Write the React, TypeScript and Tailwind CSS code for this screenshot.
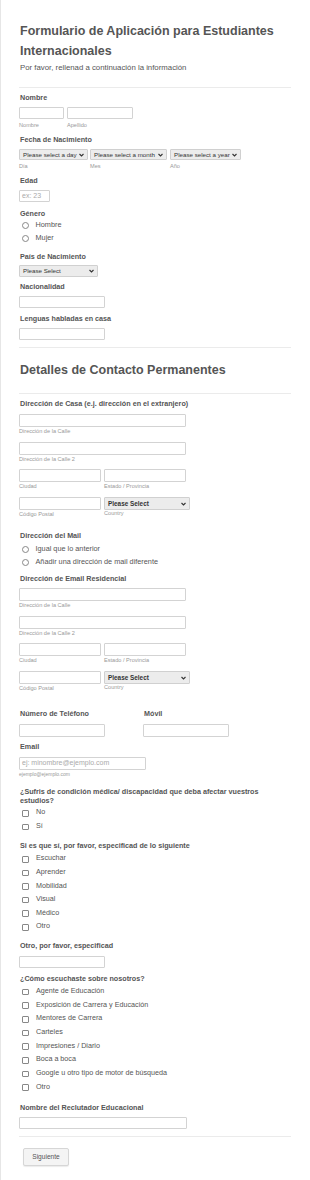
import React from "react";

const FONT = { fontFamily: '"Liberation Sans", Arial, sans-serif' };

function Label({ children, className = "" }: { children: React.ReactNode; className?: string }) {
  return <div className={`text-[7.2px] leading-[10px] font-bold text-[#555] ${className}`}>{children}</div>;
}

function Sub({ children, className = "" }: { children: React.ReactNode; className?: string }) {
  return <div className={`text-[5.6px] leading-[8px] text-[#999] ${className}`}>{children}</div>;
}

function Input({ w, h = 13, placeholder, className = "" }: { w: string; h?: number; placeholder?: string; className?: string }) {
  return (
    <div
      className={`${w} ${h === 12 ? "h-[12px]" : "h-[13px]"} border border-[#d3d3d3] bg-white rounded-[1px] flex items-center pl-[2px] text-[7px] text-[#aaa] ${className}`}
    >
      {placeholder}
    </div>
  );
}

function Chevron() {
  return (
    <svg width="5" height="4" viewBox="0 0 10 7" className="shrink-0">
      <path d="M1 1.5 L5 5.5 L9 1.5" stroke="#333" strokeWidth="2.2" fill="none" />
    </svg>
  );
}

function Select({ w, text, h = 11, bold = false }: { w: string; text: string; h?: number; bold?: boolean }) {
  return (
    <div
      className={`${w} ${h === 11 ? "h-[11px]" : h === 12 ? "h-[12px]" : "h-[13px]"} border border-[#d0d0d0] bg-[#ececec] rounded-[1px] flex items-center justify-between pl-[3px] pr-[3px] text-[#333] ${bold ? "text-[6.4px] font-bold" : "text-[6.2px]"}`}
    >
      <span className="whitespace-nowrap">{text}</span>
      <Chevron />
    </div>
  );
}

function Radio({ label }: { label: string }) {
  return (
    <div className="h-[13px] flex items-center">
      <div className="w-[6.5px] h-[6.5px] rounded-full border border-[#888] bg-white ml-[3px]" />
      <span className="ml-[7px] text-[7.3px] text-[#555]">{label}</span>
    </div>
  );
}

function Check({ label, h = "h-[13.6px]" }: { label: string; h?: string }) {
  return (
    <div className={`${h} flex items-center`}>
      <div className="w-[6.5px] h-[6.5px] rounded-[1px] border border-[#888] bg-white ml-[3px] mt-[1px]" />
      <span className="ml-[7.5px] text-[7.2px] text-[#555]">{label}</span>
    </div>
  );
}

function Divider({ className = "" }: { className?: string }) {
  return <div className={`h-px bg-[#ebebeb] w-[272px] ${className}`} />;
}

function Address() {
  return (
    <div>
      <Input w="w-[167px]" />
      <Sub>Dirección de la Calle</Sub>
      <Input w="w-[167px]" className="mt-[7px]" />
      <Sub>Dirección de la Calle 2</Sub>
      <div className="flex gap-[3px] mt-[6px]">
        <div>
          <Input w="w-[82px]" />
          <Sub>Ciudad</Sub>
        </div>
        <div>
          <Input w="w-[82px]" />
          <Sub>Estado / Provincia</Sub>
        </div>
      </div>
      <div className="flex gap-[3px] mt-[7px]">
        <div>
          <Input w="w-[82px]" />
          <Sub>Código Postal</Sub>
        </div>
        <div>
          <Select w="w-[86px]" text="Please Select" h={13} bold />
          <Sub className="-mt-[1px]">Country</Sub>
        </div>
      </div>
    </div>
  );
}

export default function App() {
  return (
    <div style={FONT} className="bg-white min-h-[1180px] border-l border-[#e6e6e6]">
      <div className="pl-[18px] pb-[14px]">
        <div className="pt-[21px] text-[12.5px] leading-[20px] font-bold text-[#555] pl-px">
          Formulario de Aplicación para Estudiantes
          <br />
          Internacionales
        </div>
        <div className="mt-[2px] text-[7.8px] leading-[10px] text-[#555] pl-px">
          Por favor, rellenad a continuación la información
        </div>
        <Divider className="mt-[14px]" />

        <Label className="mt-[5px] pl-px">Nombre</Label>
        <div className="flex gap-[3px] mt-[4px]">
          <div>
            <Input w="w-[45px]" h={12} />
            <Sub className="mt-[2px]">Nombre</Sub>
          </div>
          <div>
            <Input w="w-[66px]" h={12} />
            <Sub className="mt-[2px]">Apellido</Sub>
          </div>
        </div>

        <Label className="mt-[6px] pl-px">Fecha de Nacimiento</Label>
        <div className="flex gap-[2px] mt-[4px]">
          <div>
            <Select w="w-[69px]" text="Please select a day" />
            <Sub className="mt-[2px]">Día</Sub>
          </div>
          <div>
            <Select w="w-[77px]" text="Please select a month" />
            <Sub className="mt-[2px]">Mes</Sub>
          </div>
          <div className="ml-[1px]">
            <Select w="w-[71px]" text="Please select a year" />
            <Sub className="mt-[2px]">Año</Sub>
          </div>
        </div>

        <Label className="mt-[6px] pl-px">Edad</Label>
        <Input w="w-[31px]" h={12} placeholder="ex: 23" className="mt-[4px]" />

        <Label className="mt-[7px] pl-px">Género</Label>
        <Radio label="Hombre" />
        <Radio label="Mujer" />

        <Label className="mt-[7px] pl-px">País de Nacimiento</Label>
        <div className="mt-[3px]">
          <Select w="w-[79px]" text="Please Select" h={12} />
        </div>

        <Label className="mt-[5px] pl-px">Nacionalidad</Label>
        <Input w="w-[86px]" h={12} className="mt-[4px]" />

        <Label className="mt-[6px] pl-px">Lenguas habladas en casa</Label>
        <Input w="w-[86px]" h={12} className="mt-[4px]" />

        <Divider className="mt-[7px]" />

        <div className="mt-[12px] text-[12.5px] leading-[20px] font-bold text-[#555] pl-px">
          Detalles de Contacto Permanentes
        </div>
        <Divider className="mt-[13px]" />

        <Label className="mt-[5px] pl-px">Dirección de Casa (e.j. dirección en el extranjero)</Label>
        <div className="mt-[5px]">
          <Address />
        </div>

        <Label className="mt-[13px] pl-px">Dirección del Mail</Label>
        <div className="mt-[2px]">
          <Radio label="Igual que lo anterior" />
          <Radio label="Añadir una dirección de mail diferente" />
        </div>

        <Label className="mt-[5px] pl-px">Dirección de Email Residencial</Label>
        <div className="mt-[4px]">
          <Address />
        </div>

        <div className="flex mt-[17px]">
          <div className="w-[124px]">
            <Label className="pl-px">Número de Teléfono</Label>
            <Input w="w-[86px]" className="mt-[5px]" />
          </div>
          <div>
            <Label className="pl-px">Móvil</Label>
            <Input w="w-[86px]" className="mt-[5px]" />
          </div>
        </div>

        <Label className="mt-[5px] pl-px">Email</Label>
        <Input w="w-[127px]" placeholder="ej: minombre@ejemplo.com" className="mt-[5px]" />
        <Sub className="text-[5px] text-[#777]">ejemplo@ejemplo.com</Sub>

        <div className="mt-[9px] text-[7.2px] leading-[9px] font-bold text-[#555] pl-px w-[260px]">
          ¿Sufris de condición médica/ discapacidad que deba afectar vuestros estudios?
        </div>
        <div className="mt-[1px]">
          <Check label="No" h="h-[13.5px]" />
          <Check label="Sí" h="h-[13.5px]" />
        </div>

        <Label className="mt-[8px] pl-px">Si es que sí, por favor, especificad de lo siguiente</Label>
        <div className="mt-[1px]">
          <Check label="Escuchar" />
          <Check label="Aprender" />
          <Check label="Mobilidad" />
          <Check label="Visual" />
          <Check label="Médico" />
          <Check label="Otro" />
        </div>

        <Label className="mt-[7px] pl-px">Otro, por favor, especificad</Label>
        <Input w="w-[86px]" h={12} className="mt-[5px]" />

        <Label className="mt-[6px] pl-px">¿Cómo escuchaste sobre nosotros?</Label>
        <div className="mt-[1px]">
          <Check label="Agente de Educación" h="h-[13.7px]" />
          <Check label="Exposición de Carrera y Educación" h="h-[13.7px]" />
          <Check label="Mentores de Carrera" h="h-[13.7px]" />
          <Check label="Carteles" h="h-[13.7px]" />
          <Check label="Impresiones / Diario" h="h-[13.7px]" />
          <Check label="Boca a boca" h="h-[13.7px]" />
          <Check label="Google u otro tipo de motor de búsqueda" h="h-[13.7px]" />
          <Check label="Otro" h="h-[13.7px]" />
        </div>

        <Label className="mt-[9px] pl-px">Nombre del Reclutador Educacional</Label>
        <Input w="w-[168px]" h={12} className="mt-[4px]" />

        <Divider className="mt-[7px]" />

        <div className="mt-[11px] ml-[4px] w-[46px] h-[18px] border border-[#d6d6d6] bg-[#f4f4f4] rounded-[2px] flex items-center justify-center text-[6.6px] text-[#555] shadow-[0_1px_1px_rgba(0,0,0,0.08)]">
          Siguiente
        </div>
      </div>
    </div>
  );
}
